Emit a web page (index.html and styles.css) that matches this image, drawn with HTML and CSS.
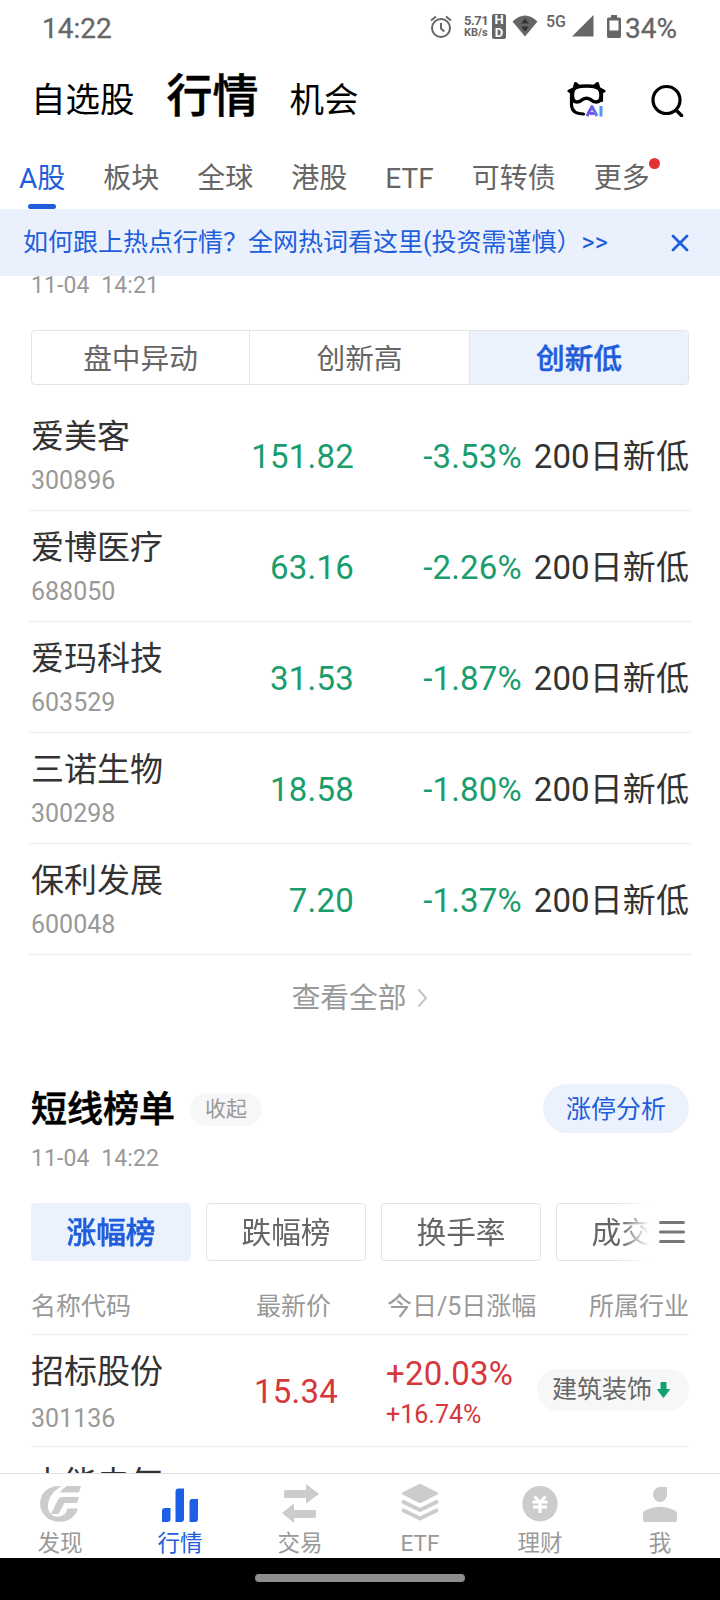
FILE: index.html
```html
<!DOCTYPE html>
<html lang="zh-CN">
<head>
  <meta charset="UTF-8" />
  <title>行情</title>
  <link rel="stylesheet" href="styles.css">
</head>
<body>
  <div id="app">
    <header class="status-bar">
      <span class="clock">14:22</span>
      <div class="status-icons">
        <svg class="alarm" width="22" height="24" viewBox="0 0 22 24" fill="none" stroke="#666" stroke-width="2">
          <circle cx="11" cy="13" r="9" />
          <path d="M11 8v5.500l3.400 3M1 5.500L6 1.500M21 5.500L16 1.500" />
        </svg>
        <div class="speed"><span class="rate">5.71</span><span>KB/s</span></div>
        <div class="hd"><span>H</span><span>D</span></div>
        <svg class="wifi" width="26" height="22" viewBox="0 0 26 22">
          <path d="M0.500 6.500Q13-5.500 25.500 6.500L13 21.500z" fill="#666" />
          <path d="M9 8.500L13 3.500L17 8.500zM9 11.500h8l-4 5z" fill="#333" />
        </svg>
        <span class="net">5G</span>
        <svg class="signal" width="22" height="22" viewBox="0 0 22 22"><path d="M21.500 0v21.500H0z" fill="#666" /></svg>
        <svg class="battery" width="14" height="24" viewBox="0 0 14 24">
          <path d="M4 0h6v2.500h2.500a1.500 1.500 0 0 1 1.500 1.500v17.500a1.500 1.500 0 0 1-1.500 1.500h-11a1.500 1.500 0 0 1-1.500-1.500v-17.500A1.500 1.500 0 0 1 1.500 2.500H4z" fill="#666" />
          <path d="M2.500 5.500h9v10h-9z" fill="#fff" />
        </svg>
        <span class="percent">34%</span>
      </div>
    </header>

    <nav class="main-nav">
      <span>自选股</span>
      <span class="active">行情</span>
      <span>机会</span>
      <div class="nav-icons">
        <svg width="40" height="38" viewBox="0 0 40 38">
          <defs>
            <linearGradient id="ai" gradientUnits="userSpaceOnUse" x1="19" y1="0" x2="35" y2="0">
              <stop offset="0" stop-color="#7a3fe0" />
              <stop offset="1" stop-color="#4f9cf5" />
            </linearGradient>
          </defs>
          <g fill="none" stroke="#000" stroke-linecap="round" stroke-linejoin="round">
            <path d="M9 6Q19.500 4 30 6Q34 8 34 14Q34 21 29 21Q26 21 23.500 18.500Q19.500 16 15.500 18.500Q13 21 10 21Q5.500 21 5.500 14Q5.500 8 9 6z" stroke-width="3.400" />
            <path d="M4.500 11V24Q5 33 16.500 33M34.500 11V19.500" stroke-width="3.200" />
            <path d="M8.500 2.500L12 5.500L7 8zM30.500 2.500L27 5.500L32 8zM2 10L6 8L5.500 12zM37 10L33 8L33.500 12z" stroke-width="3" fill="#000" />
          </g>
          <path d="M20 35L25 25.500L30 35M23 32.500H28M34 25V35.500" fill="none" stroke="url(#ai)" stroke-width="3" stroke-linejoin="round" />
        </svg>
        <svg width="34" height="34" viewBox="0 0 34 34" fill="none" stroke="#000" stroke-width="3.200" stroke-linecap="round">
          <circle cx="16.500" cy="17" r="13.500" /><path d="M26.500 27.500l5 5" stroke-width="3.500" />
        </svg>
      </div>
    </nav>

    <nav class="sub-nav">
      <span class="active">A股</span>
      <span>板块</span>
      <span>全球</span>
      <span>港股</span>
      <span>ETF</span>
      <span>可转债</span>
      <span class="more">更多</span>
    </nav>

    <div class="banner">
      <span>如何跟上热点行情？全网热词看这里(投资需谨慎）&gt;&gt;</span>
      <svg width="18" height="18" viewBox="0 0 18 18" fill="none" stroke="#1f5edb" stroke-width="2.800" stroke-linecap="round"><path d="M2 2l14 14M16 2L2 16" /></svg>
    </div>

    <main>
      <div class="time first">11-04&nbsp; 14:21</div>
      <div class="segment">
        <span>盘中异动</span>
        <span>创新高</span>
        <span class="active">创新低</span>
      </div>

      <div class="low-list">
        <div class="low-row">
          <div class="stock"><b>爱美客</b><i>300896</i></div>
          <span class="price">151.82</span><span class="change">-3.53%</span><span class="tag">200日新低</span>
        </div>
        <div class="low-row">
          <div class="stock"><b>爱博医疗</b><i>688050</i></div>
          <span class="price">63.16</span><span class="change">-2.26%</span><span class="tag">200日新低</span>
        </div>
        <div class="low-row">
          <div class="stock"><b>爱玛科技</b><i>603529</i></div>
          <span class="price">31.53</span><span class="change">-1.87%</span><span class="tag">200日新低</span>
        </div>
        <div class="low-row">
          <div class="stock"><b>三诺生物</b><i>300298</i></div>
          <span class="price">18.58</span><span class="change">-1.80%</span><span class="tag">200日新低</span>
        </div>
        <div class="low-row">
          <div class="stock"><b>保利发展</b><i>600048</i></div>
          <span class="price">7.20</span><span class="change">-1.37%</span><span class="tag">200日新低</span>
        </div>
      </div>

      <div class="see-all">
        查看全部
        <svg width="11" height="20" viewBox="0 0 11 20" fill="none" stroke="#c4c4c4" stroke-width="2"><path d="M1.500 1.500L9 10L1.500 18.500" /></svg>
      </div>

      <div class="section-head">
        <h2>短线榜单</h2>
        <span class="fold">收起</span>
        <span class="analysis">涨停分析</span>
      </div>
      <div class="time">11-04&nbsp; 14:22</div>

      <div class="rank-bar">
        <div class="rank-tabs">
          <span class="active">涨幅榜</span>
          <span>跌幅榜</span>
          <span>换手率</span>
          <span>成交额</span>
        </div>
        <svg width="26" height="24" viewBox="0 0 26 24" stroke="#777" stroke-width="3" stroke-linecap="round"><path d="M1.500 2.500h23M1.500 12h23M1.500 21.500h23" /></svg>
      </div>

      <div class="rank-grid rank-header">
        <span>名称代码</span><span>最新价</span><span>今日/5日涨幅</span><span class="industry">所属行业</span>
      </div>
      <div class="rank-grid rank-row">
        <div class="stock"><b>招标股份</b><i>301136</i></div>
        <span class="latest">15.34</span>
        <div class="gain"><span>+20.03%</span><small>+16.74%</small></div>
        <div class="industry">
          <span class="pill">建筑装饰
            <svg width="13" height="16" viewBox="0 0 13 16"><path d="M4 0.500h5v7h3.500L6.500 15.500L0.500 7.500H4z" fill="#14a06c" stroke="#14a06c" stroke-linejoin="round" /></svg>
          </span>
        </div>
      </div>
      <div class="rank-grid rank-row">
        <div class="stock"><b>中能电气</b></div>
      </div>
    </main>

    <footer class="tab-bar">
      <div class="tab">
        <svg width="44" height="40" viewBox="0 0 44 40" fill="#ccc">
          <path d="M24 2Q10 1 4 11Q-1 23 7 32Q15 40 28 37Q37 34 40 24.500H29.500L27 30Q20 35 14 31Q7 25 12 13.500Q16 6 24 2z" />
          <path d="M29 2H43L41.500 7Q41 8.500 39.500 8.500H22Q25 4 29 2zM24 13H41L39 19H26.500L20.500 30H13L20 15.500Q21 13 24 13z" />
        </svg>
        <span>发现</span>
      </div>
      <div class="tab active">
        <svg width="44" height="40" viewBox="0 0 44 40" fill="#1a5fe6">
          <path d="M7 24h5.500V35q0 3-3 3H4V27q0-3 3-3zM20.500 4.500h5.500V35q0 3-3 3H17.500V7.500q0-3 3-3zM34 15h6V35q0 3-3 3H31.500V18q0-3 2.500-3z" />
        </svg>
        <span>行情</span>
      </div>
      <div class="tab">
        <svg width="44" height="40" viewBox="0 0 44 40" fill="#ccc">
          <path d="M8 6H28V0L41 10L28 19.500V14H6V8q0-2 2-2zM36 34H16V39L4 29L16 19.500V26H38V32q0 2-2 2z" />
        </svg>
        <span>交易</span>
      </div>
      <div class="tab">
        <svg width="44" height="40" viewBox="0 0 44 40" fill="#ccc" stroke="#ccc" stroke-linecap="round" stroke-linejoin="round">
          <path d="M22 1L39 9.500L22 18L5 9.500z" stroke-width="2.500" />
          <path d="M5.500 18L22 26L38.500 18M5.500 26.500L22 34.500L38.500 26.500" fill="none" stroke-width="4" />
        </svg>
        <span>ETF</span>
      </div>
      <div class="tab">
        <svg width="44" height="40" viewBox="0 0 44 40">
          <circle cx="22" cy="19.700" r="17.700" fill="#ccc" />
          <path d="M16.500 12.500L22 18.500L27.500 12.500M14.500 18H29.500M15 23H29M22 18V29" fill="none" stroke="#fff" stroke-width="3" />
        </svg>
        <span>理财</span>
      </div>
      <div class="tab">
        <svg width="44" height="40" viewBox="0 0 44 40" fill="#ccc">
          <path d="M22 3H29V10.500A7 7.500 0 1 1 22 3zM5 30Q5 27 8 26Q22 19.500 36 26Q39 27 39 30V36q0 2-2 2H7q-2 0-2-2z" />
        </svg>
        <span>我</span>
      </div>
    </footer>
    <div class="gesture"><div class="handle"></div></div>
  </div>
</body>
</html>
```

FILE: styles.css
```css
* {
  box-sizing: border-box;
}

body {
  margin: 0;
  background: #fff;
  color: #333;
  font-family: Roboto, "Noto Sans CJK SC", sans-serif;
}

#app {
  display: flex;
  flex-direction: column;
  width: 720px;
  height: 1600px;
  overflow: hidden;
}

svg {
  display: block;
  flex: none;
}

/* phone status bar */
.status-bar {
  display: flex;
  justify-content: space-between;
  height: 56px;
  padding: 0 43px 0 42px;
  color: #666;
  flex: none;
}

.clock, .percent {
  font-size: 28px;
  line-height: 57px;
  -webkit-text-stroke: 0.3px #666;
}

.status-icons {
  display: flex;
  align-items: flex-start;
}

.alarm { margin: 15px 12px 0 0; }

.speed {
  display: flex;
  flex-direction: column;
  width: 24px;
  margin: 15px 4px 0 0;
  font-size: 11px;
  font-weight: bold;
  line-height: 12px;
}

.speed .rate {
  font-size: 13px;
  letter-spacing: -0.500px;
}

.hd {
  display: flex;
  flex-direction: column;
  width: 14px;
  height: 25px;
  margin: 14px 6px 0 0;
  border-radius: 2px;
  background: #666;
  color: #fff;
  font-size: 13px;
  font-weight: bold;
  line-height: 12.500px;
  text-align: center;
}

.wifi { margin: 15px 8px 0 0; }

.net {
  width: 21px;
  margin: 13px 5px 0 0;
  font-size: 16px;
  font-weight: 500;
  line-height: 18px;
}

.signal { margin: 15px 13px 0 0; }
.battery { margin: 15px 4px 0 0; }

/* top level tabs */
.main-nav {
  display: flex;
  align-items: baseline;
  height: 86px;
  padding: 10px 36px 0 31px;
  color: #000;
  font-size: 34.500px;
  line-height: 61px;
  flex: none;
}

.main-nav .active {
  margin: 0 31px 0 32px;
  font-size: 46px;
  font-weight: 500;
  -webkit-text-stroke: 0.500px #000;
}

.nav-icons {
  display: flex;
  align-items: center;
  align-self: flex-start;
  gap: 43px;
  height: 67px;
  margin-left: auto;
}

.sub-nav {
  display: flex;
  gap: 38px;
  height: 67px;
  padding: 0 20px 0 19px;
  color: #666;
  font-size: 28px;
  line-height: 74px;
  flex: none;
}

.sub-nav span {
  position: relative;
}

.sub-nav .active {
  color: #1f5edb;
}

.sub-nav .active::after {
  content: "";
  position: absolute;
  left: 9px;
  bottom: 0;
  width: 28px;
  height: 5px;
  border-radius: 3px;
  background: #1f5edb;
}

.more::after {
  content: "";
  position: absolute;
  left: 55px;
  top: 16px;
  width: 11px;
  height: 11px;
  border-radius: 50%;
  background: #e03237;
}

.banner {
  display: flex;
  justify-content: space-between;
  align-items: center;
  height: 67px;
  padding: 0 31px 0 23px;
  background: #eaf1fc;
  color: #1f5edb;
  font-size: 25px;
  line-height: 68px;
  flex: none;
}

/* scrolled content */
main {
  flex: 1;
  min-height: 0;
  padding: 0 31px;
  overflow: hidden;
}

.time {
  height: 30px;
  color: #999;
  font-size: 23px;
  letter-spacing: 0.100px;
  line-height: 30px;
}

.time.first {
  margin-top: -5px;
}

.segment {
  display: grid;
  grid-template-columns: 217px 220px 1fr;
  height: 55px;
  margin-top: 29px;
  border: 1px solid #e4e4e4;
  border-radius: 4px;
  overflow: hidden;
  color: #666;
  font-size: 28.700px;
  line-height: 56px;
  text-align: center;
}

.segment span + span {
  border-left: 1px solid #e4e4e4;
}

.segment .active, .rank-tabs .active {
  background: #ecf2fd;
  color: #1f5edb;
  font-weight: 500;
  -webkit-text-stroke: 0.500px #1f5edb;
}

.low-list {
  margin: 15px -3px 0;
}

.low-row {
  display: grid;
  grid-template-columns: 170px 153px 168px 1fr;
  align-items: center;
  height: 111px;
  padding: 2px 3px 0;
  border-bottom: 1px solid #eee;
  font-size: 33px;
  line-height: 60px;
  text-align: right;
}

.low-row > span {
  padding-top: 2px;
}

.stock {
  display: flex;
  flex-direction: column;
  padding-top: 4px;
  text-align: left;
  white-space: nowrap;
}

.stock b {
  font-size: 33px;
  font-weight: normal;
  line-height: 44px;
}

.stock i {
  color: #999;
  font-size: 25px;
  font-style: normal;
  line-height: 43px;
}

.price, .change {
  color: #1a9d6c;
  letter-spacing: 0.200px;
}

.tag {
  letter-spacing: 0.100px;
  white-space: nowrap;
}

.see-all {
  display: flex;
  justify-content: center;
  align-items: center;
  gap: 11px;
  height: 86px;
  color: #999;
  font-size: 28.700px;
  line-height: 87px;
}

.section-head {
  display: flex;
  align-items: center;
  height: 50px;
  margin-top: 43px;
}

h2 {
  margin: 0;
  padding-top: 2px;
  color: #000;
  font-size: 36px;
  font-weight: 500;
  line-height: 48px;
  -webkit-text-stroke: 0.600px #000;
}

.fold {
  width: 72px;
  margin-left: 15px;
  border-radius: 17px;
  background: #f7f7f7;
  color: #999;
  font-size: 21px;
  line-height: 33px;
  text-align: center;
}

.analysis {
  width: 146px;
  height: 49px;
  margin: 0 0 1px auto;
  border-radius: 25px;
  background: #ecf2fd;
  color: #1f5edb;
  font-size: 25px;
  line-height: 51px;
  text-align: center;
}

.section-head + .time {
  margin-top: 10px;
}

.rank-bar {
  display: flex;
  justify-content: space-between;
  align-items: center;
  margin-top: 29px;
  padding-right: 4px;
}

.rank-tabs {
  display: flex;
  gap: 15px;
  width: 618px;
  overflow: hidden;
  -webkit-mask-image: linear-gradient(to right, #000 590px, transparent);
  mask-image: linear-gradient(to right, #000 590px, transparent);
}

.rank-tabs span {
  width: 160px;
  height: 58px;
  border: 1px solid #e4e4e4;
  border-radius: 4px;
  color: #666;
  font-size: 29.700px;
  line-height: 58px;
  text-align: center;
  flex: none;
}

.rank-tabs .active {
  border-color: #ecf2fd;
}

.rank-grid {
  display: grid;
  grid-template-columns: 223px 132px 151px 1fr;
  border-bottom: 1px solid #eee;
}

.rank-header {
  height: 74px;
  color: #999;
  font-size: 25px;
  line-height: 92px;
  white-space: nowrap;
}

.rank-header span:nth-child(2) {
  padding-left: 2px;
}

.rank-header span:nth-child(3) {
  padding-left: 1px;
}

.rank-row {
  height: 112px;
}

.rank-row .stock {
  padding-top: 15px;
}

.rank-row .stock i {
  line-height: 50px;
}

.rank-row .latest, .gain {
  color: #d5373c;
  font-size: 33px;
  letter-spacing: 0.200px;
}

.rank-row .latest {
  line-height: 114px;
}

.gain {
  display: flex;
  flex-direction: column;
  padding-top: 17px;
  line-height: 44px;
}

.gain small {
  font-size: 25px;
  letter-spacing: 0;
  line-height: 37px;
}

.industry {
  text-align: right;
}

.pill {
  display: flex;
  align-items: center;
  justify-content: space-between;
  height: 42px;
  margin-top: 34px;
  padding: 0 19px 0 15px;
  border-radius: 21px;
  background: #f7f7f7;
  color: #666;
  font-size: 25px;
  line-height: 44px;
}

/* bottom tab bar */
.tab-bar {
  display: flex;
  height: 85px;
  border-top: 1px solid #e0e0e0;
  background: #fff;
  color: #999;
  font-size: 22.500px;
  line-height: 30px;
  flex: none;
}

.tab {
  display: flex;
  flex-direction: column;
  align-items: center;
  width: 120px;
  padding-top: 10px;
}

.tab span {
  margin-top: 4px;
}

.tab.active {
  color: #1f5edb;
}

.gesture {
  display: flex;
  justify-content: center;
  height: 42px;
  padding-top: 16px;
  background: #000;
  flex: none;
}

.handle {
  width: 210px;
  height: 8px;
  border-radius: 4px;
  background: #8e8e8e;
}
```
